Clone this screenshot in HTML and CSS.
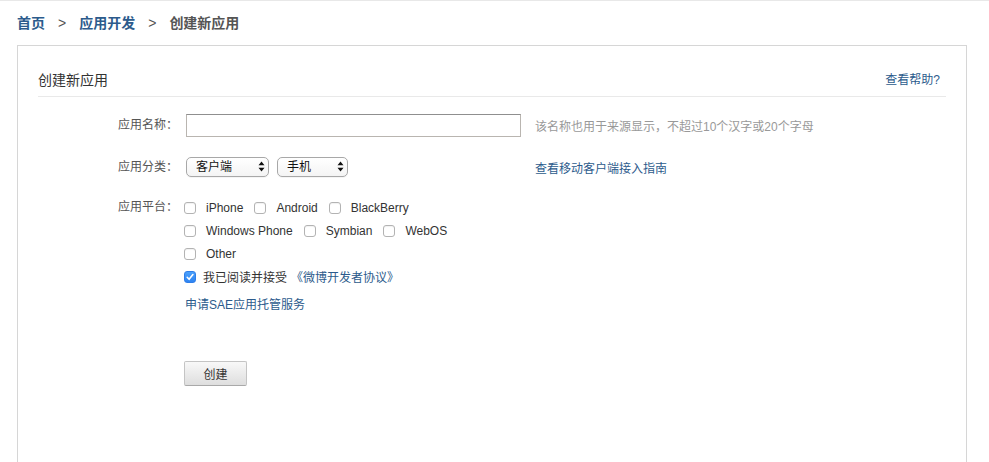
FILE: index.html
```html
<!DOCTYPE html>
<html lang="zh-CN">
<head>
<meta charset="utf-8">
<title>创建新应用</title>
<link rel="stylesheet" href="styles.css">
</head>
<body>
<div class="topline"></div>
<nav class="crumbs">
  <a class="crumb-link" href="#">首页</a><span class="sep">&gt;</span><a class="crumb-link" href="#">应用开发</a><span class="sep">&gt;</span><span class="crumb-cur">创建新应用</span>
</nav>

<section class="panel">
  <header class="panel-head">
    <h2 class="panel-title">创建新应用</h2>
    <a class="help" href="#">查看帮助?</a>
  </header>

  <form class="form">
    <div class="row row-name">
      <label class="lbl" for="appname">应用名称：</label>
      <input class="text-input" id="appname" type="text">
      <span class="hint">该名称也用于来源显示，不超过10个汉字或20个字母</span>
    </div>

    <div class="row row-cat">
      <span class="lbl">应用分类：</span>
      <div class="selects">
        <span class="sel-wrap sel-a">
          <select class="sel"><option>客户端</option></select>
          <svg class="sel-arrows" width="7" height="11" viewBox="0 0 7 11"><path d="M3.5 0.5 L6.5 4.3 L0.5 4.3 Z M3.5 10.5 L6.5 6.7 L0.5 6.7 Z" fill="#111"/></svg>
        </span>
        <span class="sel-wrap sel-b">
          <select class="sel"><option>手机</option></select>
          <svg class="sel-arrows" width="7" height="11" viewBox="0 0 7 11"><path d="M3.5 0.5 L6.5 4.3 L0.5 4.3 Z M3.5 10.5 L6.5 6.7 L0.5 6.7 Z" fill="#111"/></svg>
        </span>
      </div>
      <a class="link" href="#">查看移动客户端接入指南</a>
    </div>

    <div class="row row-plat">
      <span class="lbl lbl-top">应用平台：</span>
      <div class="plat">
        <div class="line">
          <label class="opt"><input class="cb" type="checkbox">iPhone</label>
          <label class="opt"><input class="cb" type="checkbox">Android</label>
          <label class="opt"><input class="cb" type="checkbox">BlackBerry</label>
        </div>
        <div class="line">
          <label class="opt"><input class="cb" type="checkbox">Windows Phone</label>
          <label class="opt"><input class="cb" type="checkbox">Symbian</label>
          <label class="opt"><input class="cb" type="checkbox">WebOS</label>
        </div>
        <div class="line">
          <label class="opt"><input class="cb" type="checkbox">Other</label>
        </div>
        <div class="line">
          <label class="opt agree">
            <span class="cb-wrap">
              <input class="cb cb-on" type="checkbox" checked>
              <svg class="tick" width="12" height="12" viewBox="0 0 12 12"><path d="M3.2 6.3 L5.1 8.3 L8.9 3.6" fill="none" stroke="#fff" stroke-width="1.6" stroke-linecap="round" stroke-linejoin="round"/></svg>
            </span>我已阅读并接受<a class="link" href="#">《微博开发者协议》</a>
          </label>
        </div>
        <a class="link sae" href="#">申请SAE应用托管服务</a>
        <button class="btn" type="button">创建</button>
      </div>
    </div>
  </form>
</section>
</body>
</html>
```

FILE: styles.css
```css
html, body {
  margin: 0;
  padding: 0;
  background: #fff;
}

body {
  font-family: "Liberation Sans", "Noto Sans CJK SC", sans-serif;
  font-size: 12px;
  color: #333;
}

a {
  text-decoration: none;
}

.topline {
  height: 1px;
  background: #e8e8e8;
}

.crumbs {
  padding: 14px 0 0 17px;
  height: 16px;
  line-height: 16px;
  font-size: 14px;
  font-weight: bold;
  margin-bottom: 14px;
}

.crumb-link {
  color: #2c5b8c;
}

.sep {
  color: #555;
  padding: 0 13px;
  font-weight: normal;
}

.crumb-cur {
  color: #555;
}

.panel {
  margin-left: 17px;
  width: 948px;
  min-height: 430px;
  border: 1px solid #d6d6d6;
  border-bottom: none;
  padding: 0 19px 0 20px;
  box-sizing: content-box;
  width: 909px;
}

.panel-head {
  display: flex;
  justify-content: space-between;
  align-items: center;
  padding-top: 24px;
  padding-bottom: 6px;
  border-bottom: 1px solid #e9e9e9;
  height: 20px;
  margin-right: 1px;
}

.panel-title {
  margin: 0;
  font-size: 14px;
  font-weight: normal;
  color: #333;
  line-height: 20px;
}

.help {
  color: #2c5b8c;
  font-size: 12px;
  line-height: 20px;
  padding-right: 6px;
}

.form {
  padding-top: 17px;
}

.row {
  display: flex;
  align-items: center;
}

.lbl {
  width: 140px;
  padding-right: 6px;
  box-sizing: content-box;
  text-align: right;
  color: #555;
  line-height: 23px;
  flex-shrink: 0;
}

.lbl-top {
  align-self: flex-start;
}

.row-name {
  height: 23px;
}

.text-input {
  margin: 0 0 0 2px;
  width: 335px;
  height: 23px;
  box-sizing: border-box;
  border: 1px solid #b9b5b0;
  border-top-color: #8f8f8f;
  padding: 0 4px;
  font: inherit;
  outline: none;
}

.hint {
  margin-left: 14px;
  color: #999;
}

.row-cat {
  margin-top: 20px;
  height: 20px;
}

.selects {
  width: 349px;
  padding-left: 2px;
  display: flex;
  gap: 8px;
  flex-shrink: 0;
}

.sel-wrap {
  position: relative;
  display: block;
  height: 20px;
}

.sel-a { width: 83px; }
.sel-b { width: 71px; }

.sel {
  appearance: none;
  -webkit-appearance: none;
  width: 100%;
  height: 20px;
  box-sizing: border-box;
  border: 1px solid #a8a8a8;
  border-radius: 5px;
  background: linear-gradient(#ffffff, #f4f4f4);
  padding: 0 0 0 9px;
  font: inherit;
  font-size: 12px;
  color: #111;
  line-height: 18px;
  box-shadow: 0 1px 0 rgba(0,0,0,0.04);
}

.sel-arrows {
  position: absolute;
  right: 4px;
  top: 4px;
  pointer-events: none;
}

.link {
  color: #2c5b8c;
}

.row-plat {
  margin-top: 19px;
  align-items: flex-start;
}

.plat {
  display: flex;
  flex-direction: column;
  align-items: flex-start;
}

.line {
  display: flex;
  height: 23px;
  align-items: center;
}

.opt {
  display: flex;
  align-items: center;
  margin-right: 11px;
  color: #333;
  font-size: 12px;
}

.cb {
  appearance: none;
  -webkit-appearance: none;
  width: 12px;
  height: 12px;
  margin: 1px 10px 0 0;
  border: 1px solid #b3b3b3;
  border-radius: 3px;
  background: #fff;
  box-shadow: inset 0 1px 1px rgba(0,0,0,0.06);
  box-sizing: border-box;
  flex-shrink: 0;
}

.cb-wrap {
  position: relative;
  display: block;
  width: 12px;
  height: 12px;
  margin: 1px 7px 0 0;
}

.cb-on {
  display: block;
  margin: 0;
  border-color: #2f7ee8;
  background: linear-gradient(#4aa0fb, #2e84f2);
  box-shadow: none;
}

.tick {
  position: absolute;
  left: 0;
  top: 0;
  pointer-events: none;
}

.agree .link {
  margin-left: 4px;
}

.sae {
  display: block;
  margin-top: 6px;
  line-height: 23px;
  margin-left: 1px;
}

.btn {
  margin-top: 44px;
  width: 63px;
  height: 25px;
  border: 1px solid #c4c4c4;
  border-bottom-color: #a9a9a9;
  border-radius: 2px;
  background: linear-gradient(#f8f8f8, #dedede);
  font: inherit;
  font-size: 12px;
  color: #333;
  padding: 0;
}
```
